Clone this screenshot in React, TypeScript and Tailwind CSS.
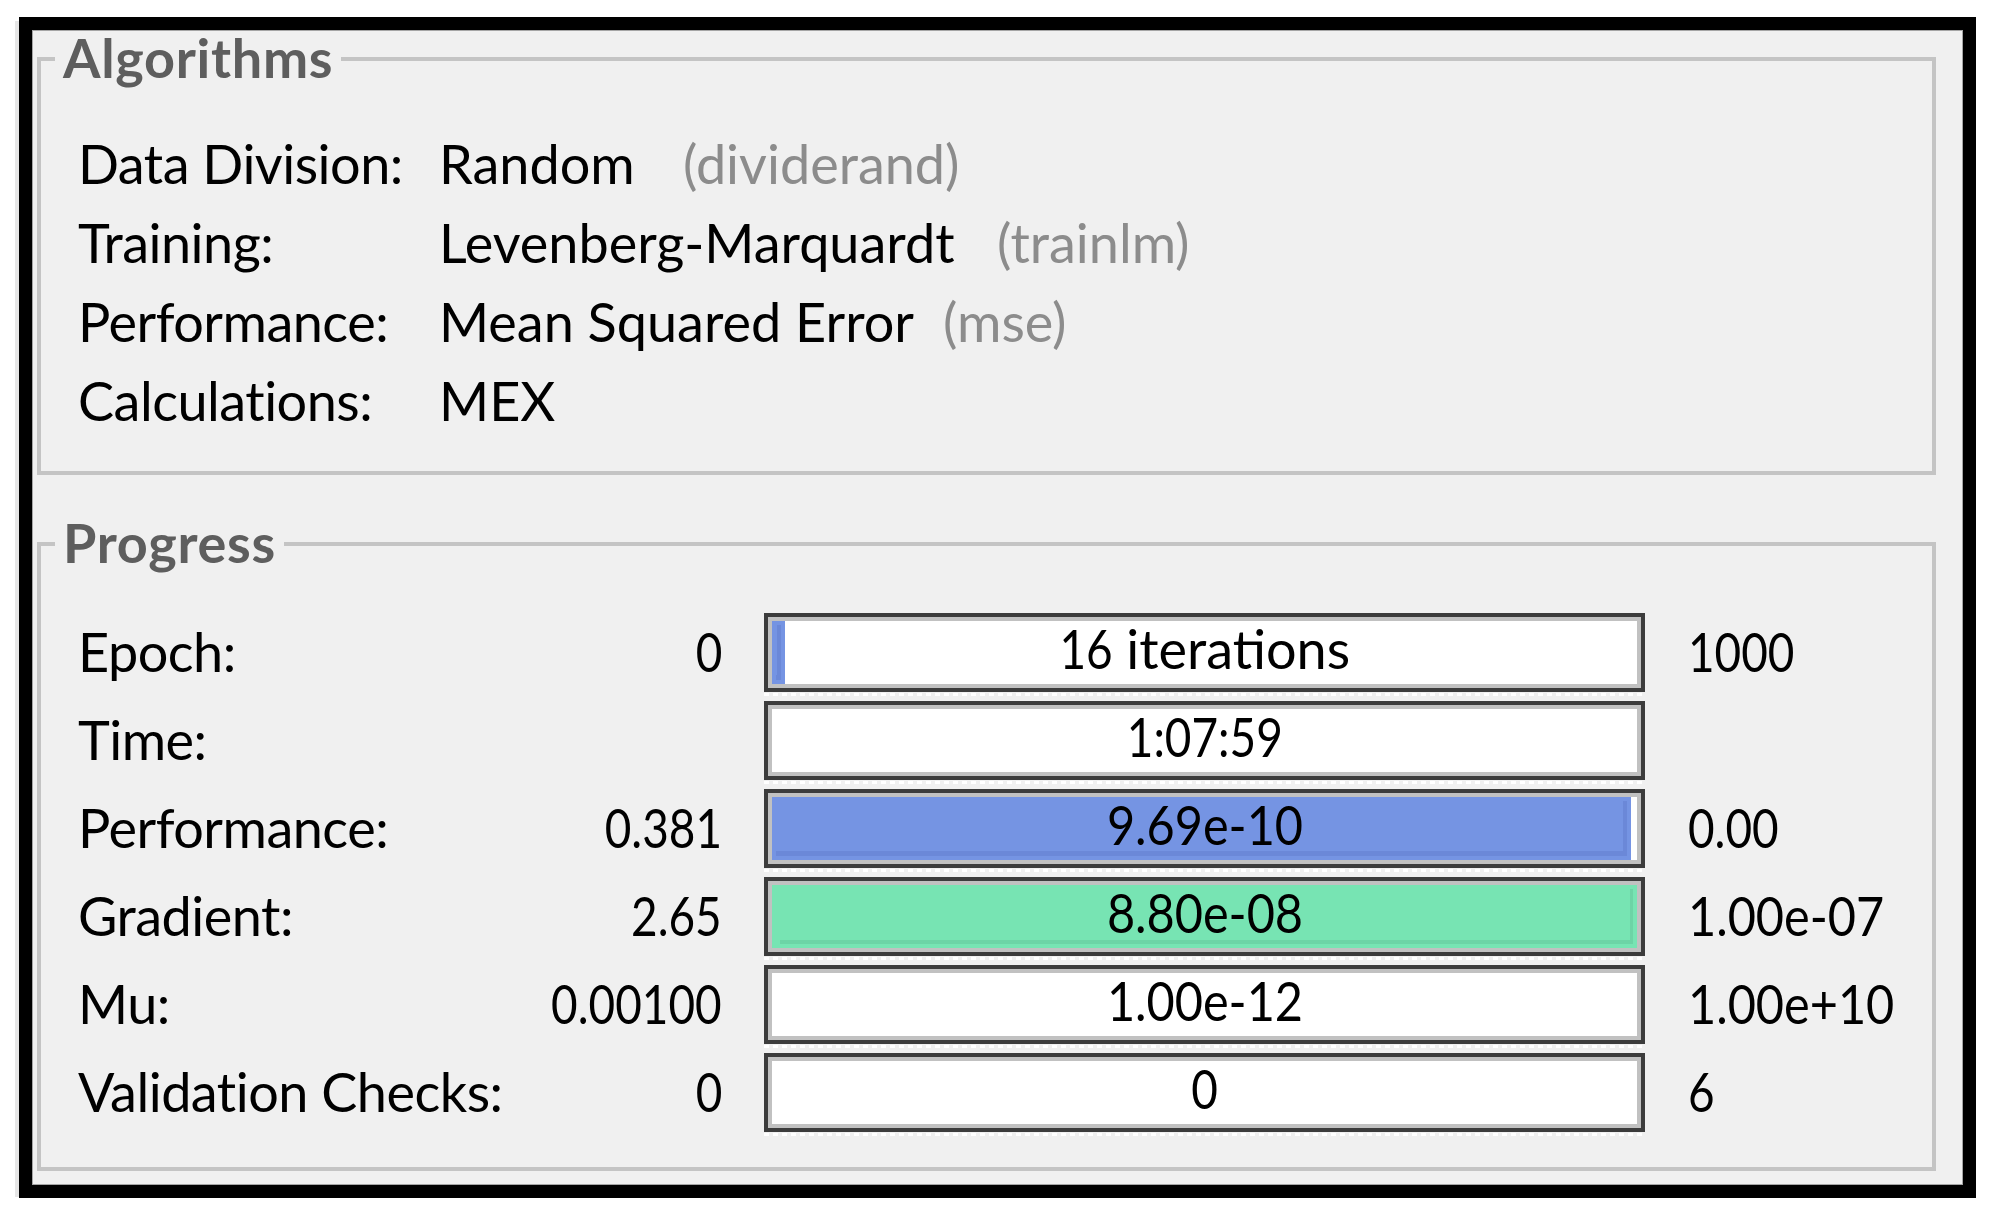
import React from "react";

type Fill = { w: number | "full"; color: "blue" | "green" } | null;

const algo: [string, string, string, number][] = [
  ["Data Division:", "Random", "(dividerand)", 244],
  ["Training:", "Levenberg-Marquardt", "(trainlm)", 558],
  ["Performance:", "Mean Squared Error", "(mse)", 504],
  ["Calculations:", "MEX", "", 0],
];

type PRow = {
  label: string;
  left: string;
  text: string;
  right: string;
  fill: Fill;
};

const prog: PRow[] = [
  { label: "Epoch:", left: "0", text: "16 iterations", right: "1000", fill: { w: 13, color: "blue" } },
  { label: "Time:", left: "", text: "1:07:59", right: "", fill: null },
  { label: "Performance:", left: "0.381", text: "9.69e-10", right: "0.00", fill: { w: 859, color: "blue" } },
  { label: "Gradient:", left: "2.65", text: "8.80e-08", right: "1.00e-07", fill: { w: "full", color: "green" } },
  { label: "Mu:", left: "0.00100", text: "1.00e-12", right: "1.00e+10", fill: null },
  { label: "Validation Checks:", left: "0", text: "0", right: "6", fill: null },
];

function NumR({ v }: { v: string }) {
  return <span className="inline-block origin-right scale-x-[0.85]">{v}</span>;
}
function NumL({ v }: { v: string }) {
  if (v.includes("e")) {
    return <span className="inline-block origin-left scale-x-[0.9]">{v}</span>;
  }
  return <span className="inline-block origin-left scale-x-[0.85]">{v}</span>;
}
function NumC({ v }: { v: string }) {
  if (v.includes("e")) {
    return <span className="inline-block origin-center scale-x-[0.9]">{v}</span>;
  }
  return <span className="inline-block origin-center scale-x-[0.85]">{v}</span>;
}

function GroupTitle({ title }: { title: string }) {
  return (
    <div className="absolute left-[14px] top-[-30px] bg-[#f0f0f0] px-[8px] text-[54px] font-bold leading-[54px] tracking-[0.7px] text-[#5e5e5e]">
      {title}
    </div>
  );
}

function BarText({ text }: { text: string }) {
  if (text === "16 iterations") {
    return (
      <span>
        <span className="-ml-[9px] inline-block origin-right scale-x-[0.85]">16</span> iterations
      </span>
    );
  }
  return <NumC v={text} />;
}

function Bar({ row }: { row: PRow }) {
  const f = row.fill;
  return (
    <div className="ml-[42px] mt-[4px] flex w-[881px] flex-col">
      <div className="h-[79px] w-[881px] border-4 border-[#3c3c3c]">
        <div className="relative h-full w-full border-4 border-[#c1c1c1] bg-white">
          {f && (
            <div
              className={
                f.color === "blue"
                  ? "absolute bottom-0 left-0 top-0 bg-[#7594e3] p-[4px] pl-[4px]"
                  : "absolute bottom-0 left-0 top-0 bg-[#77e4b3] p-[4px] pl-[8px]"
              }
              style={{ width: f.w === "full" ? "100%" : f.w }}
            >
              <div
                className={
                  f.color === "blue"
                    ? "h-full w-full border-b-[5px] border-r-[4px] border-[#6b88d8]"
                    : "h-full w-full border-b-[4px] border-r-[3px] border-[#6dd4a6]"
                }
              />
            </div>
          )}
          <div className="relative flex h-full items-center justify-center pb-[7px] text-[54px] leading-[54px] text-black">
            <BarText text={row.text} />
          </div>
        </div>
      </div>
      <div className="mt-[1px] h-[3px] w-full bg-[repeating-linear-gradient(90deg,#ffffff_0_5px,transparent_5px_9px)]" />
    </div>
  );
}

export default function App() {
  return (
    <div className="flex h-[1220px] w-[1995px] items-start bg-white pl-[15px] pt-[17px] font-['Lato',sans-serif] text-black">
      <div className="mt-[4px] h-[1176px] w-[4px] bg-[#e6e6e6]" />
      <div className="h-[1181px] w-[1957px] border-[13px] border-black">
        <div className="h-full border border-[#a5a5a5] bg-[#f0f0f0] pl-[4px] pt-[26px]">
          {/* Algorithms */}
          <div className="relative h-[418px] w-[1899px] border-4 border-[#c4c4c4]">
            <GroupTitle title="Algorithms" />
            <div className="flex flex-col pl-[37px] pt-[63px] text-[54px] leading-[79px]">
              {algo.map((r) => (
                <div key={r[0]} className="flex h-[79px] items-center whitespace-nowrap">
                  <span className="w-[361px] shrink-0 tracking-[-0.5px]">{r[0]}</span>
                  <span className="shrink-0" style={r[3] ? { width: r[3] } : undefined}>
                    {r[1]}
                  </span>
                  {r[2] && <span className="text-[#8c8c8c]">{r[2]}</span>}
                </div>
              ))}
            </div>
          </div>

          {/* Progress */}
          <div className="relative mt-[67px] h-[629px] w-[1899px] border-4 border-[#c4c4c4]">
            <GroupTitle title="Progress" />
            <div className="flex flex-col pl-[37px] pt-[62px] text-[54px] leading-[54px]">
              {prog.map((r) => (
                <div key={r.label} className="flex h-[88px] items-center whitespace-nowrap">
                  <div className="flex w-[644px] items-center justify-between">
                    <span className="tracking-[-0.5px]">{r.label}</span>
                    <NumR v={r.left} />
                  </div>
                  <Bar row={r} />
                  <div className="ml-[43px]">
                    <NumL v={r.right} />
                  </div>
                </div>
              ))}
            </div>
          </div>
        </div>
      </div>
    </div>
  );
}
